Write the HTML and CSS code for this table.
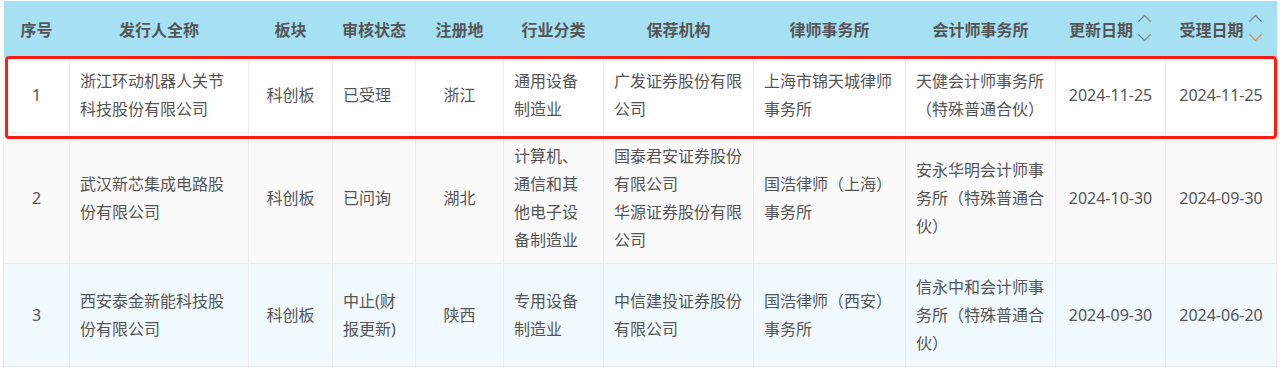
FILE: index.html
```html
<!DOCTYPE html>
<html lang="zh-CN">
<head>
<meta charset="utf-8">
<title>IPO 列表</title>
<link rel="stylesheet" href="styles.css">
</head>
<body>
<div class="wrap">
  <table class="ipo">
    <colgroup>
      <col class="w-no"><col class="w-name"><col class="w-board"><col class="w-status"><col class="w-reg">
      <col class="w-ind"><col class="w-spon"><col class="w-law"><col class="w-acc"><col class="w-date"><col class="w-date2">
    </colgroup>
    <thead>
      <tr>
        <th>序号</th><th>发行人全称</th><th>板块</th><th>审核状态</th><th>注册地</th><th>行业分类</th>
        <th>保荐机构</th><th>律师事务所</th><th>会计师事务所</th>
        <th><span class="sorth">更新日期<svg class="sort" width="15" height="28" viewBox="0 0 15 28"><polyline points="1.5,7.5 7.5,1.5 13.5,7.5" class="s-off"/><polyline points="1.5,20.5 7.5,26.5 13.5,20.5" class="s-off"/></svg></span></th>
        <th><span class="sorth">受理日期<svg class="sort" width="15" height="28" viewBox="0 0 15 28"><polyline points="1.5,7.5 7.5,1.5 13.5,7.5" class="s-off"/><polyline points="1.5,20.5 7.5,26.5 13.5,20.5" class="s-on"/></svg></span></th>
      </tr>
    </thead>
    <tbody>
      <tr class="r-white">
        <td class="c">1</td><td>浙江环动机器人关节科技股份有限公司</td><td class="c">科创板</td><td>已受理</td><td class="c">浙江</td>
        <td>通用设备制造业</td><td>广发证券股份有限公司</td><td>上海市锦天城律师事务所</td><td>天健会计师事务所（特殊普通合伙）</td>
        <td class="c">2024-11-25</td><td class="c">2024-11-25</td>
      </tr>
      <tr class="r-grey">
        <td class="c">2</td><td>武汉新芯集成电路股份有限公司</td><td class="c">科创板</td><td>已问询</td><td class="c">湖北</td>
        <td>计算机、通信和其他电子设备制造业</td><td>国泰君安证券股份有限公司<br>华源证券股份有限公司</td><td>国浩律师（上海）事务所</td><td>安永华明会计师事务所（特殊普通合伙）</td>
        <td class="c">2024-10-30</td><td class="c">2024-09-30</td>
      </tr>
      <tr class="r-hover">
        <td class="c">3</td><td>西安泰金新能科技股份有限公司</td><td class="c">科创板</td><td>中止(财报更新)</td><td class="c">陕西</td>
        <td>专用设备制造业</td><td>中信建投证券股份有限公司</td><td>国浩律师（西安）事务所</td><td>信永中和会计师事务所（特殊普通合伙）</td>
        <td class="c">2024-09-30</td><td class="c">2024-06-20</td>
      </tr>
      <tr class="r-white">
        <td class="c">&nbsp;</td><td>&nbsp;</td><td>&nbsp;</td><td>&nbsp;</td><td>&nbsp;</td><td>&nbsp;</td>
        <td>&nbsp;</td><td>&nbsp;</td><td>&nbsp;</td><td>&nbsp;</td><td>&nbsp;</td>
      </tr>
    </tbody>
  </table>
  <div class="mark"></div>
</div>
</body>
</html>
```

FILE: styles.css
```css
html, body {
  margin: 0;
  padding: 0;
  background: #ffffff;
}
body {
  font-family: "Noto Sans", "Noto Sans CJK SC", sans-serif;
  font-size: 16px;
  color: #555555;
}
.wrap {
  position: relative;
  padding: 1px 0 0 3px;
}
.ipo {
  width: 1273px;
  table-layout: fixed;
  border-collapse: collapse;
}
.w-no { width: 66px; }
.w-name { width: 179px; }
.w-board { width: 84px; }
.w-status { width: 83px; }
.w-reg { width: 88px; }
.w-ind { width: 100px; }
.w-spon { width: 150px; }
.w-law { width: 152px; }
.w-acc { width: 150px; }
.w-date { width: 110px; }
.w-date2 { width: 111px; }

.ipo th {
  height: 56px;
  padding: 0 4px;
  background: #a6e0f3;
  color: #565656;
  font-weight: 700;
  font-size: 16px;
  text-align: center;
  vertical-align: middle;
  white-space: nowrap;
}
.sorth {
  display: inline-flex;
  align-items: center;
  gap: 4px;
}
.sort {
  display: block;
  margin-top: -2px;
}
.sort polyline {
  fill: none;
  stroke-width: 1.2;
  stroke-linecap: round;
  stroke-linejoin: round;
}
.s-off { stroke: #7d8a90; }
.s-on { stroke: #e8874e; }

.ipo td {
  padding: 9px 11px 9px 10px;
  line-height: 28px;
  vertical-align: middle;
  text-align: left;
  border: 1px solid #ebebeb;
  word-break: break-all;
}
.ipo td.c {
  text-align: center;
  padding-left: 4px;
  padding-right: 4px;
}
.r-white td { background: #ffffff; }
.r-grey td { background: #fafafa; }
.r-hover td { background: #f0f9fd; }

.mark {
  position: absolute;
  left: 5px;
  top: 56px;
  width: 1272px;
  height: 83px;
  box-sizing: border-box;
  border: 3px solid #fd1d14;
  border-radius: 4px;
  pointer-events: none;
}
```
